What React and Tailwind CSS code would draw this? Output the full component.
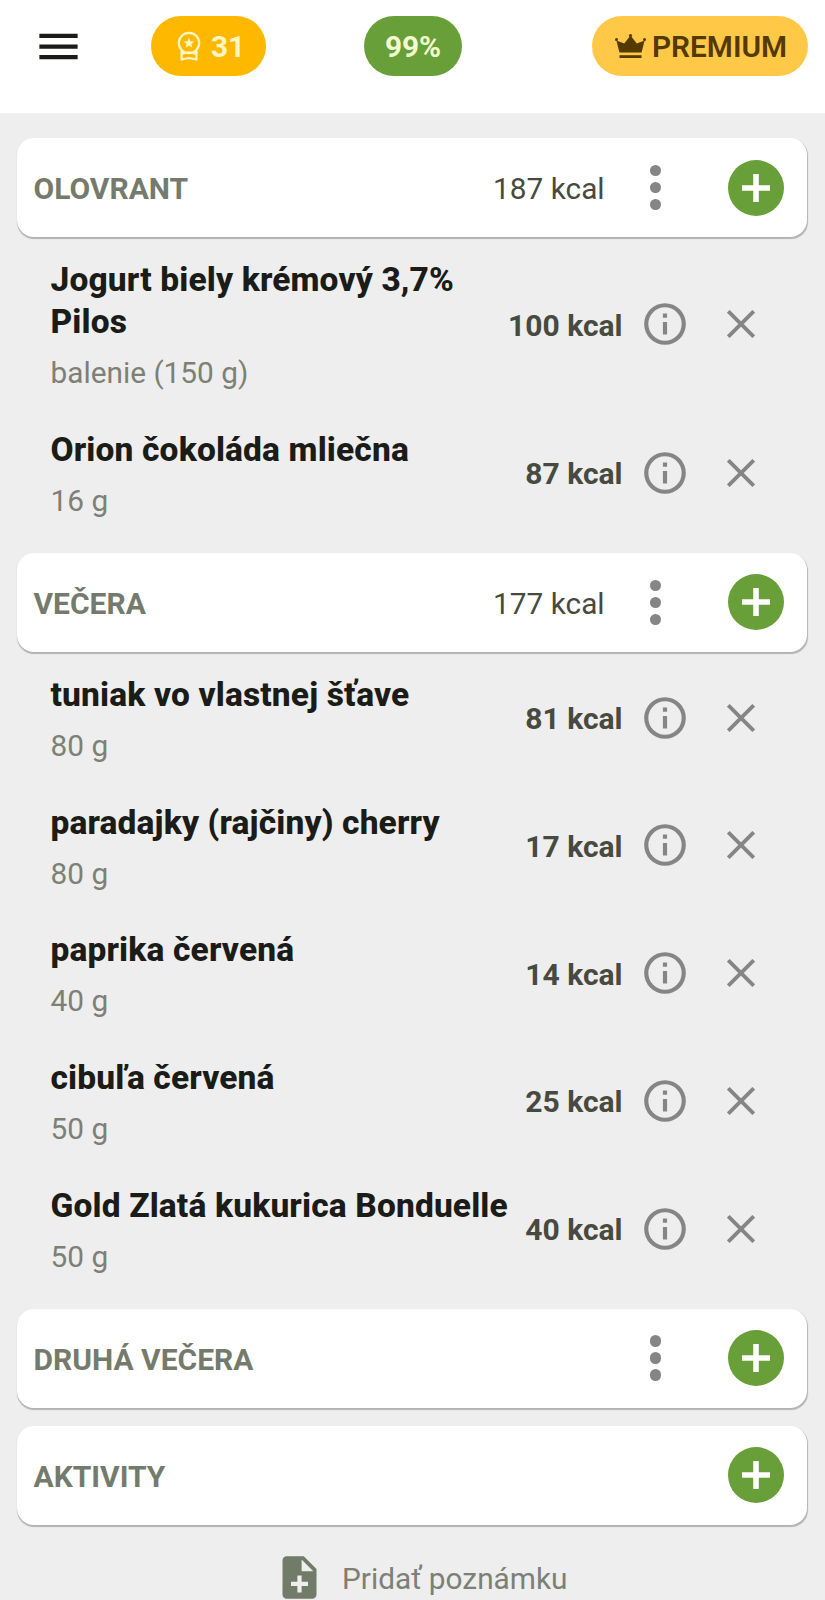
import React from 'react';

const meals = [
  {
    name: 'OLOVRANT',
    kcal: 187,
    menu: true,
    items: [
      { name: 'Jogurt biely krémový 3,7% Pilos', amount: 'balenie (150 g)', kcal: 100 },
      { name: 'Orion čokoláda mliečna', amount: '16 g', kcal: 87 },
    ],
  },
  {
    name: 'VEČERA',
    kcal: 177,
    menu: true,
    items: [
      { name: 'tuniak vo vlastnej šťave', amount: '80 g', kcal: 81 },
      { name: 'paradajky (rajčiny) cherry', amount: '80 g', kcal: 17 },
      { name: 'paprika červená', amount: '40 g', kcal: 14 },
      { name: 'cibuľa červená', amount: '50 g', kcal: 25 },
      { name: 'Gold Zlatá kukurica Bonduelle', amount: '50 g', kcal: 40 },
    ],
  },
  { name: 'DRUHÁ VEČERA', menu: true, items: [] },
  { name: 'AKTIVITY', items: [] },
];

function MenuIcon() {
  return (
    <svg viewBox="0 0 24 24" className="size-[51px]" fill="#1b1c18">
      <path d="M3 6h18v2H3zM3 11h18v2H3zM3 16h18v2H3z" />
    </svg>
  );
}

function MedalIcon() {
  return (
    <svg viewBox="0 0 24 30" className="w-6 h-[30px]" fill="none" stroke="#fff6c4" strokeWidth="2.2">
      <circle cx="12" cy="12" r="10.2" />
      <path d="M4.6 19.5V28.4L12 27l7.4 1.4V19.5M5 22.6q7 -2 14 0" />
      <path
        d="M12 6.6l1.5 3.6 3.9.3-3 2.5 1 3.8-3.4-2.1-3.4 2.1 1-3.8-3-2.5 3.9-.3z"
        fill="#fff6c4"
        stroke="none"
      />
    </svg>
  );
}

function CrownIcon() {
  return (
    <svg viewBox="0 0 31 25" className="w-[31px] h-[25px]" fill="#543a00">
      <path d="M4.4 18.6L1.4 6.4 9.2 9.4 15.5 1.4l6.3 8 7.8-3L26.6 18.6z" />
      <circle cx="1.5" cy="5.4" r="1.5" />
      <circle cx="15.5" cy="1.6" r="1.6" />
      <circle cx="29.5" cy="5.4" r="1.5" />
      <path d="M4.5 21.2h22v2.8h-22z" />
    </svg>
  );
}

function InfoIcon() {
  return (
    <svg viewBox="0 0 24 24" className="size-[50px]" fill="#858585">
      <path d="M11 7h2v2h-2zm0 4h2v6h-2zm1-9a10 10 0 1 0 0 20 10 10 0 0 0 0-20zm0 18a8 8 0 1 1 0-16 8 8 0 0 1 0 16z" />
    </svg>
  );
}

function CloseIcon() {
  return (
    <svg viewBox="0 0 28 28" className="size-7" stroke="#858585" strokeWidth="3.8">
      <path d="M1.3 1.3l25.4 25.4M26.7 1.3L1.3 26.7" />
    </svg>
  );
}

function NoteAddIcon() {
  return (
    <svg viewBox="0 0 24 24" className="size-[51px]" fill="#717b68">
      <path d="M14 2H6a2 2 0 0 0-1.99 2L4 20a2 2 0 0 0 1.99 2H18a2 2 0 0 0 2-2V8l-6-6zm2 14h-3v3h-2v-3H8v-2h3v-3h2v3h3v2zm-3-7V3.5L18.5 9H13z" />
    </svg>
  );
}

function Header() {
  return (
    <header className="h-[113px] bg-white flex items-start justify-between pl-[33px] pr-[17px] pt-4">
      <div className="flex items-center gap-[67px]">
        <button className="h-[60px] flex items-center">
          <MenuIcon />
        </button>
        <div className="w-[115px] h-[60px] rounded-full bg-[#ffb800] flex items-center pl-[26px] gap-[10px]">
          <MedalIcon />
          <span className="text-[29.8px] leading-9 font-bold text-[#fff6c4] pt-px">31</span>
        </div>
      </div>
      <div className="w-[98.5px] h-[60px] rounded-full bg-[#689f38] flex items-center justify-center mr-[32px]">
        <span className="text-[29.8px] leading-9 font-bold text-[#f0fbcf] pt-px">99%</span>
      </div>
      <div className="w-[216px] h-[60px] rounded-full bg-[#ffc947] flex items-center pl-[23px] gap-[6px]">
        <CrownIcon />
        <span className="text-[29.8px] leading-9 font-semibold text-[#543a00] pt-px">PREMIUM</span>
      </div>
    </header>
  );
}

function MealCard({ name, kcal, menu }) {
  return (
    <div className="h-[99px] bg-white rounded-[17px] shadow-[0.5px_1.5px_1px_rgba(0,0,0,0.25)] flex items-center pl-[17px] pr-[23px]">
      <h2 className="flex-1 text-[30px] leading-9 font-bold text-[#757b6c] pt-[3px]">{name}</h2>
      {kcal && (
        <span className="text-[29.8px] leading-9 text-[#464a40] pt-[3px] mr-[45px]">{kcal} kcal</span>
      )}
      {menu && (
        <div className="flex flex-col items-center gap-[5.6px] mr-[67px]">
          <span className="size-[11.4px] rounded-full bg-[#858585]" />
          <span className="size-[11.4px] rounded-full bg-[#858585]" />
          <span className="size-[11.4px] rounded-full bg-[#858585]" />
        </div>
      )}
      <button className="size-14 rounded-full bg-[#689f38] flex items-center justify-center">
        <svg viewBox="0 0 28 28" className="size-7" fill="#fff">
          <path d="M11.2 0h5.6v11.2H28v5.6H16.8V28h-5.6V16.8H0v-5.6h11.2z" />
        </svg>
      </button>
    </div>
  );
}

function FoodRow({ name, amount, kcal }) {
  return (
    <div className="flex items-center pl-[34px] pr-[52px]">
      <div className="flex-1 pt-5 pb-[17.7px]">
        <h3 className="text-[33.5px] leading-[42px] tracking-[0.14px] font-extrabold text-[#1b1c18] max-w-[462px]">
          {name}
        </h3>
        <p className="mt-3 text-[29.8px] leading-9 text-[#7d8075]">{amount}</p>
      </div>
      <span className="text-[30px] leading-9 font-bold text-[#464a40] pt-[3px] mr-[17.5px] whitespace-nowrap">
        {kcal} kcal
      </span>
      <InfoIcon />
      <button className="ml-[37px]">
        <CloseIcon />
      </button>
    </div>
  );
}

export default function App() {
  return (
    <div className="w-[825px] h-[1600px] overflow-hidden bg-[#eeeeee] font-['Roboto',sans-serif]">
      <Header />
      <main className="pt-[25px] pl-[16.5px] pr-[18px] flex flex-col gap-[16.2px]">
        {meals.map((meal) => (
          <section key={meal.name}>
            <MealCard name={meal.name} kcal={meal.kcal} menu={meal.menu} />
            {/* offset keeps the rows clear of the card's lower edge */}
            <div className="pt-[2.2px]">
              {meal.items.map((item) => (
                <FoodRow key={item.name} {...item} />
              ))}
            </div>
          </section>
        ))}
      </main>
      <div className="mt-[25px] flex items-center pl-[274px] gap-[17px]">
        <NoteAddIcon />
        <span className="text-[29.8px] leading-9 text-[#7d8075] pt-[3px]">Pridať poznámku</span>
      </div>
    </div>
  );
}
